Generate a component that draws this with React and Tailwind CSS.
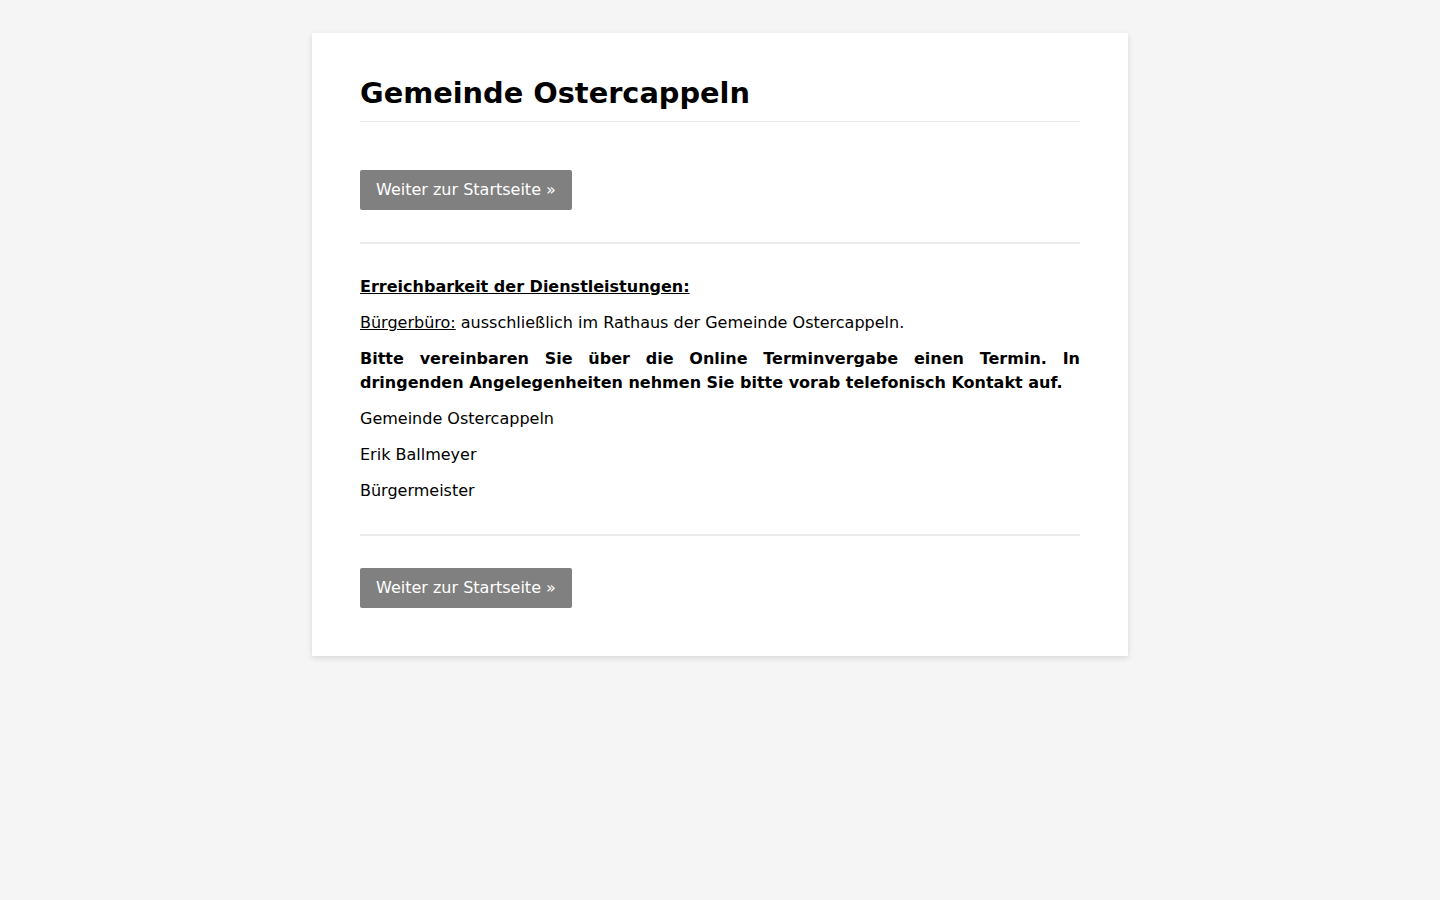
export default function App() {
  const btn = (
    <a
      href="#"
      className="inline-block h-10 rounded-[2px] bg-[#808080] px-4 text-[16px] leading-10 text-white"
    >
      Weiter zur Startseite »
    </a>
  );
  return (
    <div
      className="min-h-[900px] bg-[#f5f5f5] pt-[33px] text-black"
      style={{ fontFamily: '"DejaVu Sans", sans-serif' }}
    >
      <div className="mx-auto w-[816px] bg-white px-12 pt-[41px] pb-12 shadow-[0_2px_6px_rgba(0,0,0,0.12)]">
        <h1 className="border-b border-[#e6e6e6] pb-[9px] text-[28.8px] font-bold leading-[38px]">
          Gemeinde Ostercappeln
        </h1>
        <div className="pt-12">{btn}</div>
        <div className="mt-8 border-t-2 border-[#ececec]" />
        <div className="pt-[31px] text-[16px] leading-6">
          <p className="font-bold underline">Erreichbarkeit der Dienstleistungen:</p>
          <p className="mt-3">
            <span className="underline">Bürgerbüro:</span> ausschließlich im Rathaus der Gemeinde Ostercappeln.
          </p>
          <p className="mt-3 text-justify font-bold">
            Bitte vereinbaren Sie über die Online Terminvergabe einen Termin. In dringenden Angelegenheiten nehmen Sie bitte vorab telefonisch Kontakt auf.
          </p>
          <p className="mt-3">Gemeinde Ostercappeln</p>
          <p className="mt-3">Erik Ballmeyer</p>
          <p className="mt-3">Bürgermeister</p>
        </div>
        <div className="mt-[31px] border-t-2 border-[#ececec]" />
        <div className="pt-8">{btn}</div>
      </div>
    </div>
  );
}
